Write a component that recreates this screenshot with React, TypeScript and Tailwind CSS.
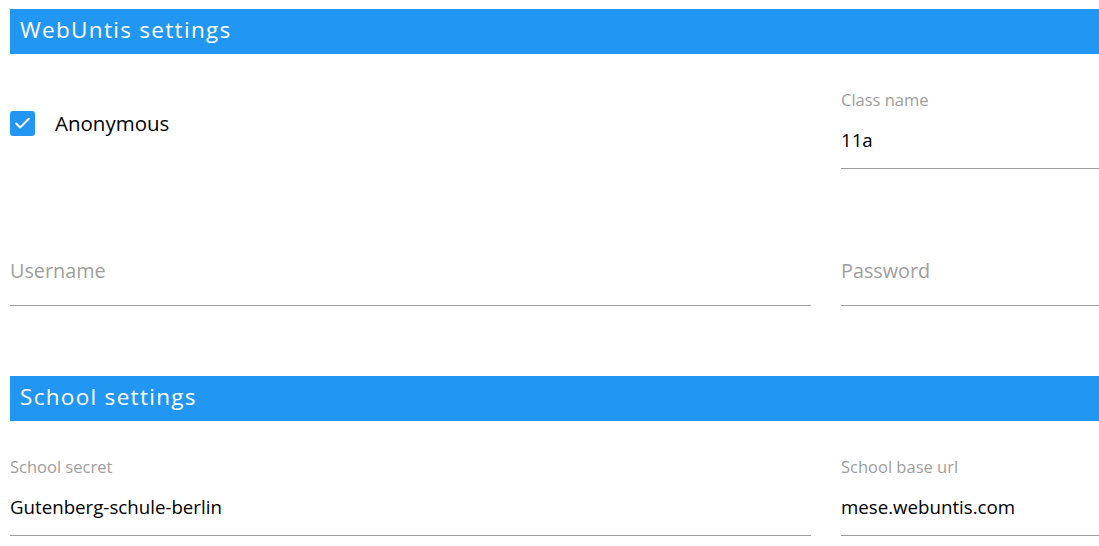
import { Check } from 'lucide-react'

const font = { fontFamily: '"Open Sans", "Noto Sans", sans-serif' }

function SectionHeader({ title }: { title: string }) {
  return (
    <div className="h-[45px] bg-[#2196f3] pl-[10px] pb-[3px] flex items-center">
      <h2 className="text-white text-[22.5px] font-medium tracking-[1.3px] leading-none">{title}</h2>
    </div>
  )
}

function Field({ label, value }: { label: string; value: string }) {
  return (
    <div className="flex flex-col border-b border-[#9e9e9e] pb-[16px]">
      <label className="text-[16.5px] leading-[20px] text-[#9e9e9e]">{label}</label>
      <div className="mt-[18px] text-[18.7px] leading-[24px] text-black">{value}</div>
    </div>
  )
}

function EmptyField({ placeholder }: { placeholder: string }) {
  return (
    <div className="border-b border-[#9e9e9e] pb-[22px]">
      <div className="text-[19.8px] leading-[24px] text-[#9e9e9e]">{placeholder}</div>
    </div>
  )
}

export default function App() {
  return (
    <div className="w-[1099px] h-[546px] bg-white overflow-hidden pl-[10px] pt-[9px]" style={font}>
      <SectionHeader title="WebUntis settings" />

      <div className="mt-[36px] grid grid-cols-[801px_258px] gap-x-[30px]">
        <div className="flex items-center gap-[20px] mt-[18px] self-start">
          <div className="w-[25px] h-[25px] rounded-[3px] bg-[#2196f3] flex items-center justify-center">
            <Check size={19} strokeWidth={2.5} className="text-white" />
          </div>
          <span className="text-[20.5px] text-black">Anonymous</span>
        </div>
        <Field label="Class name" value="11a" />
      </div>

      <div className="mt-[90px] grid grid-cols-[801px_258px] gap-x-[30px]">
        <EmptyField placeholder="Username" />
        <EmptyField placeholder="Password" />
      </div>

      <div className="mt-[70px]">
        <SectionHeader title="School settings" />
      </div>

      <div className="mt-[36px] grid grid-cols-[801px_258px] gap-x-[30px]">
        <Field label="School secret" value="Gutenberg-schule-berlin" />
        <Field label="School base url" value="mese.webuntis.com" />
      </div>
    </div>
  )
}
